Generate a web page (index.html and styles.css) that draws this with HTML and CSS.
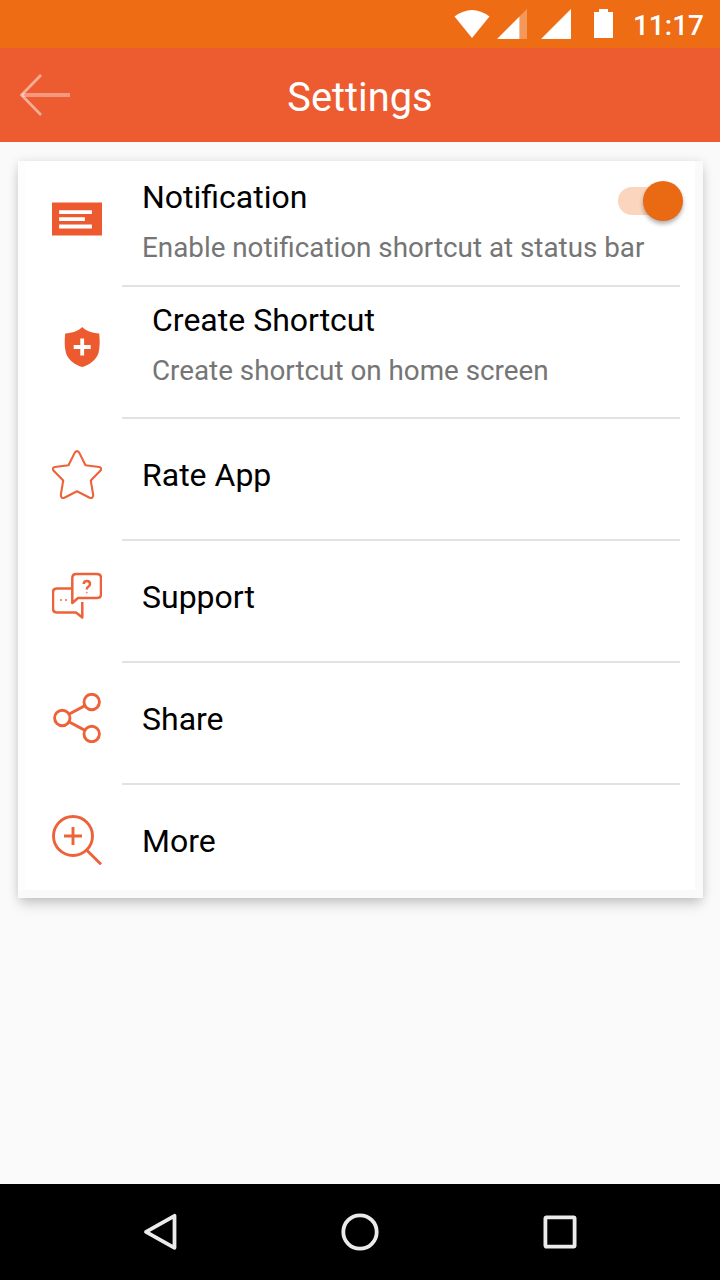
FILE: index.html
```html
<!DOCTYPE html>
<html lang="en">
<head>
    <meta charset="UTF-8">
    <meta name="viewport" content="width=device-width, initial-scale=1.0">
    <title>Settings</title>
    <link rel="stylesheet" href="styles.css">
</head>
<body>

    <!-- Status bar -->
    <div class="status-bar">
        <svg class="status-icons" width="160" height="48" viewBox="455 0 160 48" fill="#fff">
            <path d="M454.500 16.500Q472 3.500 489.500 16.500L472 38Z"/>
            <path d="M497 39L519.500 16.500V39Z"/>
            <path d="M519.500 16.500L527 9V39H519.500Z" opacity=".3"/>
            <path d="M541 39L571 9V39Z"/>
            <path d="M594 12H599V9H608V12H613V38H594Z"/>
        </svg>
        <span class="clock">11:17</span>
    </div>

    <!-- Header -->
    <header class="header">
        <svg class="back" width="52" height="48" viewBox="0 0 52 48" fill="none" stroke="#fff">
            <path d="M4 24H52" stroke-width="4" opacity=".38"/>
            <path d="M23 4L3.500 24L23 44" stroke-width="2.700" opacity=".5"/>
        </svg>
        <h1>Settings</h1>
    </header>

    <main class="page">
        <div class="card">
            <div class="row notification">
                <svg class="icon" viewBox="0 0 50 50">
                    <path d="M0 8.500H50V41.500H0Z" fill="#ed5a2f"/>
                    <path d="M9 18.200H38M9 25.200H31M9 32.500H38" stroke="#fff" stroke-width="3.800" stroke-linecap="square"/>
                </svg>
                <div class="content">
                    <div class="text">
                        <h2>Notification</h2>
                        <p>Enable notification shortcut at status bar</p>
                    </div>
                    <span class="toggle"><span class="thumb"></span></span>
                </div>
            </div>

            <div class="row shortcut">
                <svg class="icon" viewBox="0 0 50 50">
                    <path d="M30.200 5C33.500 8.600 40 11 47.200 11.500C47.900 18 48 25 46.500 31C44 38.500 37 43 30.200 45C23.400 43 16.400 38.500 14 31C12.300 25 12.500 18 13.200 11.500C20.400 11 27 8.600 30.200 5Z" fill="#ed5a2f"/>
                    <path d="M30.200 16.500V33.500M21.700 25H38.700" stroke="#fff" stroke-width="3.800"/>
                </svg>
                <div class="content">
                    <div class="text">
                        <h2>Create Shortcut</h2>
                        <p>Create shortcut on home screen</p>
                    </div>
                </div>
            </div>

            <div class="row">
                <svg class="icon line" viewBox="0 0 50 50">
                    <path d="M22.800 2.600Q25 -.4 27.200 2.600L33.500 15.200L47.200 17Q50.600 18 48.300 20.800L38.800 30.600L41.200 45Q41 48.800 37.600 47.700L25 41.200L12.400 47.700Q9 48.800 8.800 45L11.200 30.600L1.700 20.800Q-.6 18 2.800 17L16.500 15.200Z" stroke-width="2.100"/>
                </svg>
                <div class="content"><h2>Rate App</h2></div>
            </div>

            <div class="row chat">
                <svg class="icon line" viewBox="0 0 50 50" stroke-width="2.500">
                    <path d="M20.300 32V7Q20.300 3 24.300 3H45Q49 3 49 7V23Q49 27 45 27H26Z"/>
                    <path d="M20 17.500H5Q1 17.500 1 21.500V37.500Q1 41.500 5 41.500H24L30.300 46.500V31"/>
                    <path d="M31.700 13Q32 10 34.800 10Q38 10 38 13Q38 14.800 36 16Q34.800 16.800 34.800 18.500"/>
                    <path d="M34.800 20.800V22.300" stroke-width="1.800" opacity=".7"/>
                    <path d="M8 29H10M13 29H15" stroke-width="2" opacity=".7"/>
                </svg>
                <div class="content"><h2>Support</h2></div>
            </div>

            <div class="row share">
                <svg class="icon line" viewBox="0 0 50 50" stroke-width="2.900">
                    <circle cx="10.300" cy="25" r="7.700"/>
                    <circle cx="39.700" cy="9" r="7.700"/>
                    <circle cx="39.700" cy="41" r="7.700"/>
                    <path d="M17.300 21L33 12.600M17.300 29L33 37.400"/>
                </svg>
                <div class="content"><h2>Share</h2></div>
            </div>

            <div class="row more">
                <svg class="icon line" viewBox="0 0 50 50" stroke-width="2.900">
                    <circle cx="21" cy="21" r="19.500"/>
                    <path d="M12 21H30M21 12V30M34.800 35.300L49 49.300"/>
                </svg>
                <div class="content"><h2>More</h2></div>
            </div>
        </div>
    </main>

    <!-- Android navigation -->
    <nav class="nav-bar">
        <svg width="40" height="40" viewBox="0 0 40 40"><path d="M34.500 3.800V35.800L6 19.900Z"/></svg>
        <svg width="40" height="40" viewBox="0 0 40 40"><circle cx="20" cy="20" r="16.700"/></svg>
        <svg width="40" height="40" viewBox="0 0 40 40"><rect x="5.400" y="5.400" width="29.200" height="29.200" rx="1"/></svg>
    </nav>

</body>
</html>
```

FILE: styles.css
```css
* {
    box-sizing: border-box;
}
body {
    margin: 0;
    height: 1280px;
    display: flex;
    flex-direction: column;
    background: #fafafa;
    font-family: Roboto, sans-serif;
    color: #000;
}
h1, h2, p {
    margin: 0;
    font-weight: 400;
}
.status-bar {
    height: 48px;
    display: flex;
    justify-content: flex-end;
    align-items: center;
    padding-right: 16px;
    background: #ee6c13;
}
.status-icons {
    margin-right: 18px;
    overflow: visible;
}
.clock {
    font-size: 28px;
    font-weight: 500;
    line-height: 32px;
    padding-top: 3px;
    color: #fff;
}
.header {
    height: 94px;
    display: flex;
    align-items: center;
    padding: 0 70px 0 18px;
    background: #ed5b30;
    color: #fff;
}
.header h1 {
    flex: 1;
    text-align: center;
    font-size: 39.8px;
    line-height: 48px;
    padding-top: 6px;
}
.page {
    flex: 1;
    padding: 19px 17px 0 18px;
}
.card {
    height: 737px;
    background: #fff;
    box-shadow: inset -8px -8px 0 #fafafa, inset 7px 0 0 #fdfdfd, 0 8px 12px -2px rgba(0, 0, 0, 0.18), 0 0 10px rgba(0, 0, 0, 0.1);
}
.row {
    height: 122px;
    display: flex;
    align-items: center;
    padding: 0 23px 0 34px;
}
.icon {
    width: 50px;
    height: 50px;
    flex: none;
    margin: -11px 20px 0 0;
}
.line {
    fill: none;
    stroke: #ed6239;
    stroke-linejoin: round;
}
.content {
    flex: 1;
    align-self: stretch;
    display: flex;
    align-items: center;
    padding: 0 0 8px 20px;
    border-bottom: 2px solid #e2e2e2;
}
.row h2 {
    font-size: 32px;
    line-height: 38px;
}
.row p {
    margin-top: 15px;
    font-size: 27.8px;
    line-height: 34px;
    color: #757575;
    white-space: nowrap;
}
.notification {
    height: 126px;
}
.text {
    flex: 1;
    width: 0;
}
.notification .content, .shortcut .content {
    align-items: flex-start;
    padding-top: 17px;
}
.shortcut {
    height: 132px;
}
.shortcut .icon {
    margin-top: -13px;
}
.shortcut .content {
    padding-top: 14px;
    padding-left: 30px;
}
.chat .icon, .share .icon {
    margin-top: -13px;
}
.more {
    height: 113px;
}
.more .icon {
    margin-top: -3px;
}
.more .content {
    padding-bottom: 2px;
    border-bottom: none;
}
.toggle {
    width: 51px;
    height: 28px;
    margin: 9px 11px 0 0;
    display: flex;
    align-items: center;
    background: #fbd5be;
    border-radius: 14px;
}
.thumb {
    flex: none;
    width: 40px;
    height: 40px;
    margin-left: 25px;
    border-radius: 50%;
    background: #e96a13;
    box-shadow: 0 3px 4px rgba(0, 0, 0, 0.3);
}
.nav-bar {
    height: 96px;
    display: flex;
    justify-content: center;
    align-items: center;
    gap: 160px;
    background: #000;
    fill: none;
    stroke: #ebebeb;
    stroke-width: 3.800px;
    stroke-linejoin: round;
}
```
